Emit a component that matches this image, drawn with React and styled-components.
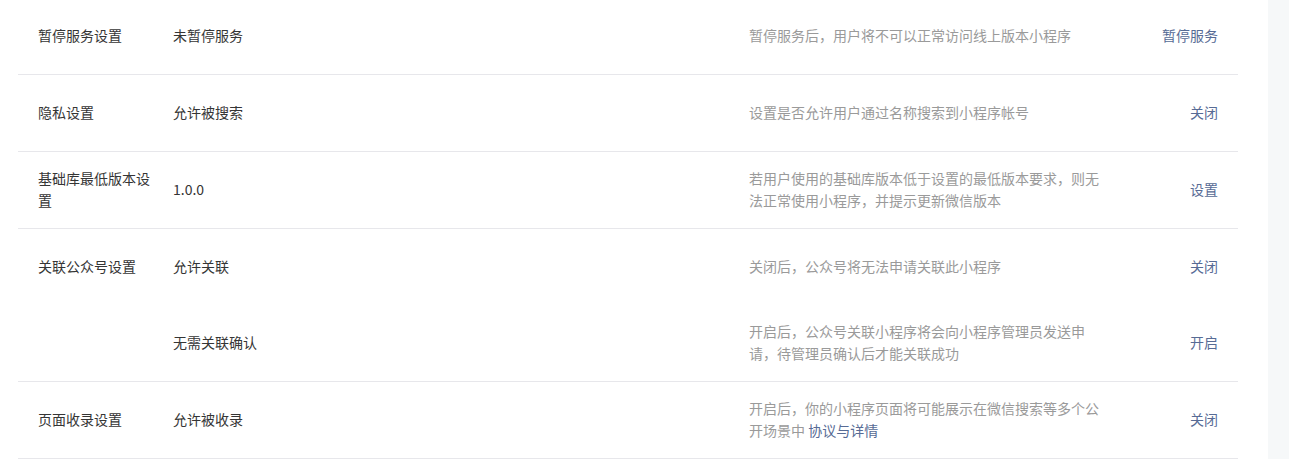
import React from "react";
import styled, { createGlobalStyle } from "styled-components";

const GlobalStyle = createGlobalStyle`
  html, body {
    margin: 0;
    padding: 0;
    background: #fff;
  }
  body {
    font-family: "Noto Sans CJK SC", "Noto Sans", sans-serif;
    font-size: 14px;
    color: #353535;
  }
`;

const Page = styled.div`
  display: flex;
  min-height: 100vh;
  overflow: hidden;
`;

const Main = styled.div`
  padding: 0 30px 0 18px;
`;

const SideStrip = styled.div`
  flex: 1;
  background: #f6f8f9;
`;

const Table = styled.div`
  width: 1220px;
  margin-top: -2px;
`;

const Group = styled.div`
  border-bottom: 1px solid #e7e7eb;
`;

const Row = styled.div`
  box-sizing: border-box;
  display: grid;
  grid-template-columns: 135px 576px 360px 109px;
  align-items: center;
  min-height: 76px;
  padding: 0 20px 2px;
  line-height: 22px;
`;

const Label = styled.div`
  padding-right: 15px;
  color: #353535;
`;

const Value = styled.div`
  color: #353535;
`;

const Desc = styled.div`
  color: #9a9a9a;
`;

const Link = styled.a`
  color: #576b95;
  text-decoration: none;
  cursor: pointer;
`;

const Action = styled.div`
  text-align: right;
`;

const settings = [
  {
    rows: [
      {
        label: "暂停服务设置",
        value: "未暂停服务",
        desc: "暂停服务后，用户将不可以正常访问线上版本小程序",
        action: "暂停服务",
      },
    ],
  },
  {
    rows: [
      {
        label: "隐私设置",
        value: "允许被搜索",
        desc: "设置是否允许用户通过名称搜索到小程序帐号",
        action: "关闭",
      },
    ],
  },
  {
    rows: [
      {
        label: "基础库最低版本设置",
        value: "1.0.0",
        desc: "若用户使用的基础库版本低于设置的最低版本要求，则无法正常使用小程序，并提示更新微信版本",
        action: "设置",
      },
    ],
  },
  {
    rows: [
      {
        label: "关联公众号设置",
        value: "允许关联",
        desc: "关闭后，公众号将无法申请关联此小程序",
        action: "关闭",
      },
      {
        label: "",
        value: "无需关联确认",
        desc: "开启后，公众号关联小程序将会向小程序管理员发送申请，待管理员确认后才能关联成功",
        action: "开启",
      },
    ],
  },
  {
    rows: [
      {
        label: "页面收录设置",
        value: "允许被收录",
        desc: "开启后，你的小程序页面将可能展示在微信搜索等多个公开场景中",
        more: "协议与详情",
        action: "关闭",
      },
    ],
  },
];

export default function App() {
  return (
    <>
      <GlobalStyle />
      <Page>
        <Main>
          <Table>
            {settings.map((group, gi) => (
              <Group key={gi}>
                {group.rows.map((row, ri) => (
                  <Row key={ri}>
                    <Label>{row.label}</Label>
                    <Value>{row.value}</Value>
                    <Desc>
                      {row.desc}
                      {row.more && (
                        <>
                          {" "}
                          <Link>{row.more}</Link>
                        </>
                      )}
                    </Desc>
                    <Action>
                      <Link>{row.action}</Link>
                    </Action>
                  </Row>
                ))}
              </Group>
            ))}
          </Table>
        </Main>
        <SideStrip />
      </Page>
    </>
  );
}
